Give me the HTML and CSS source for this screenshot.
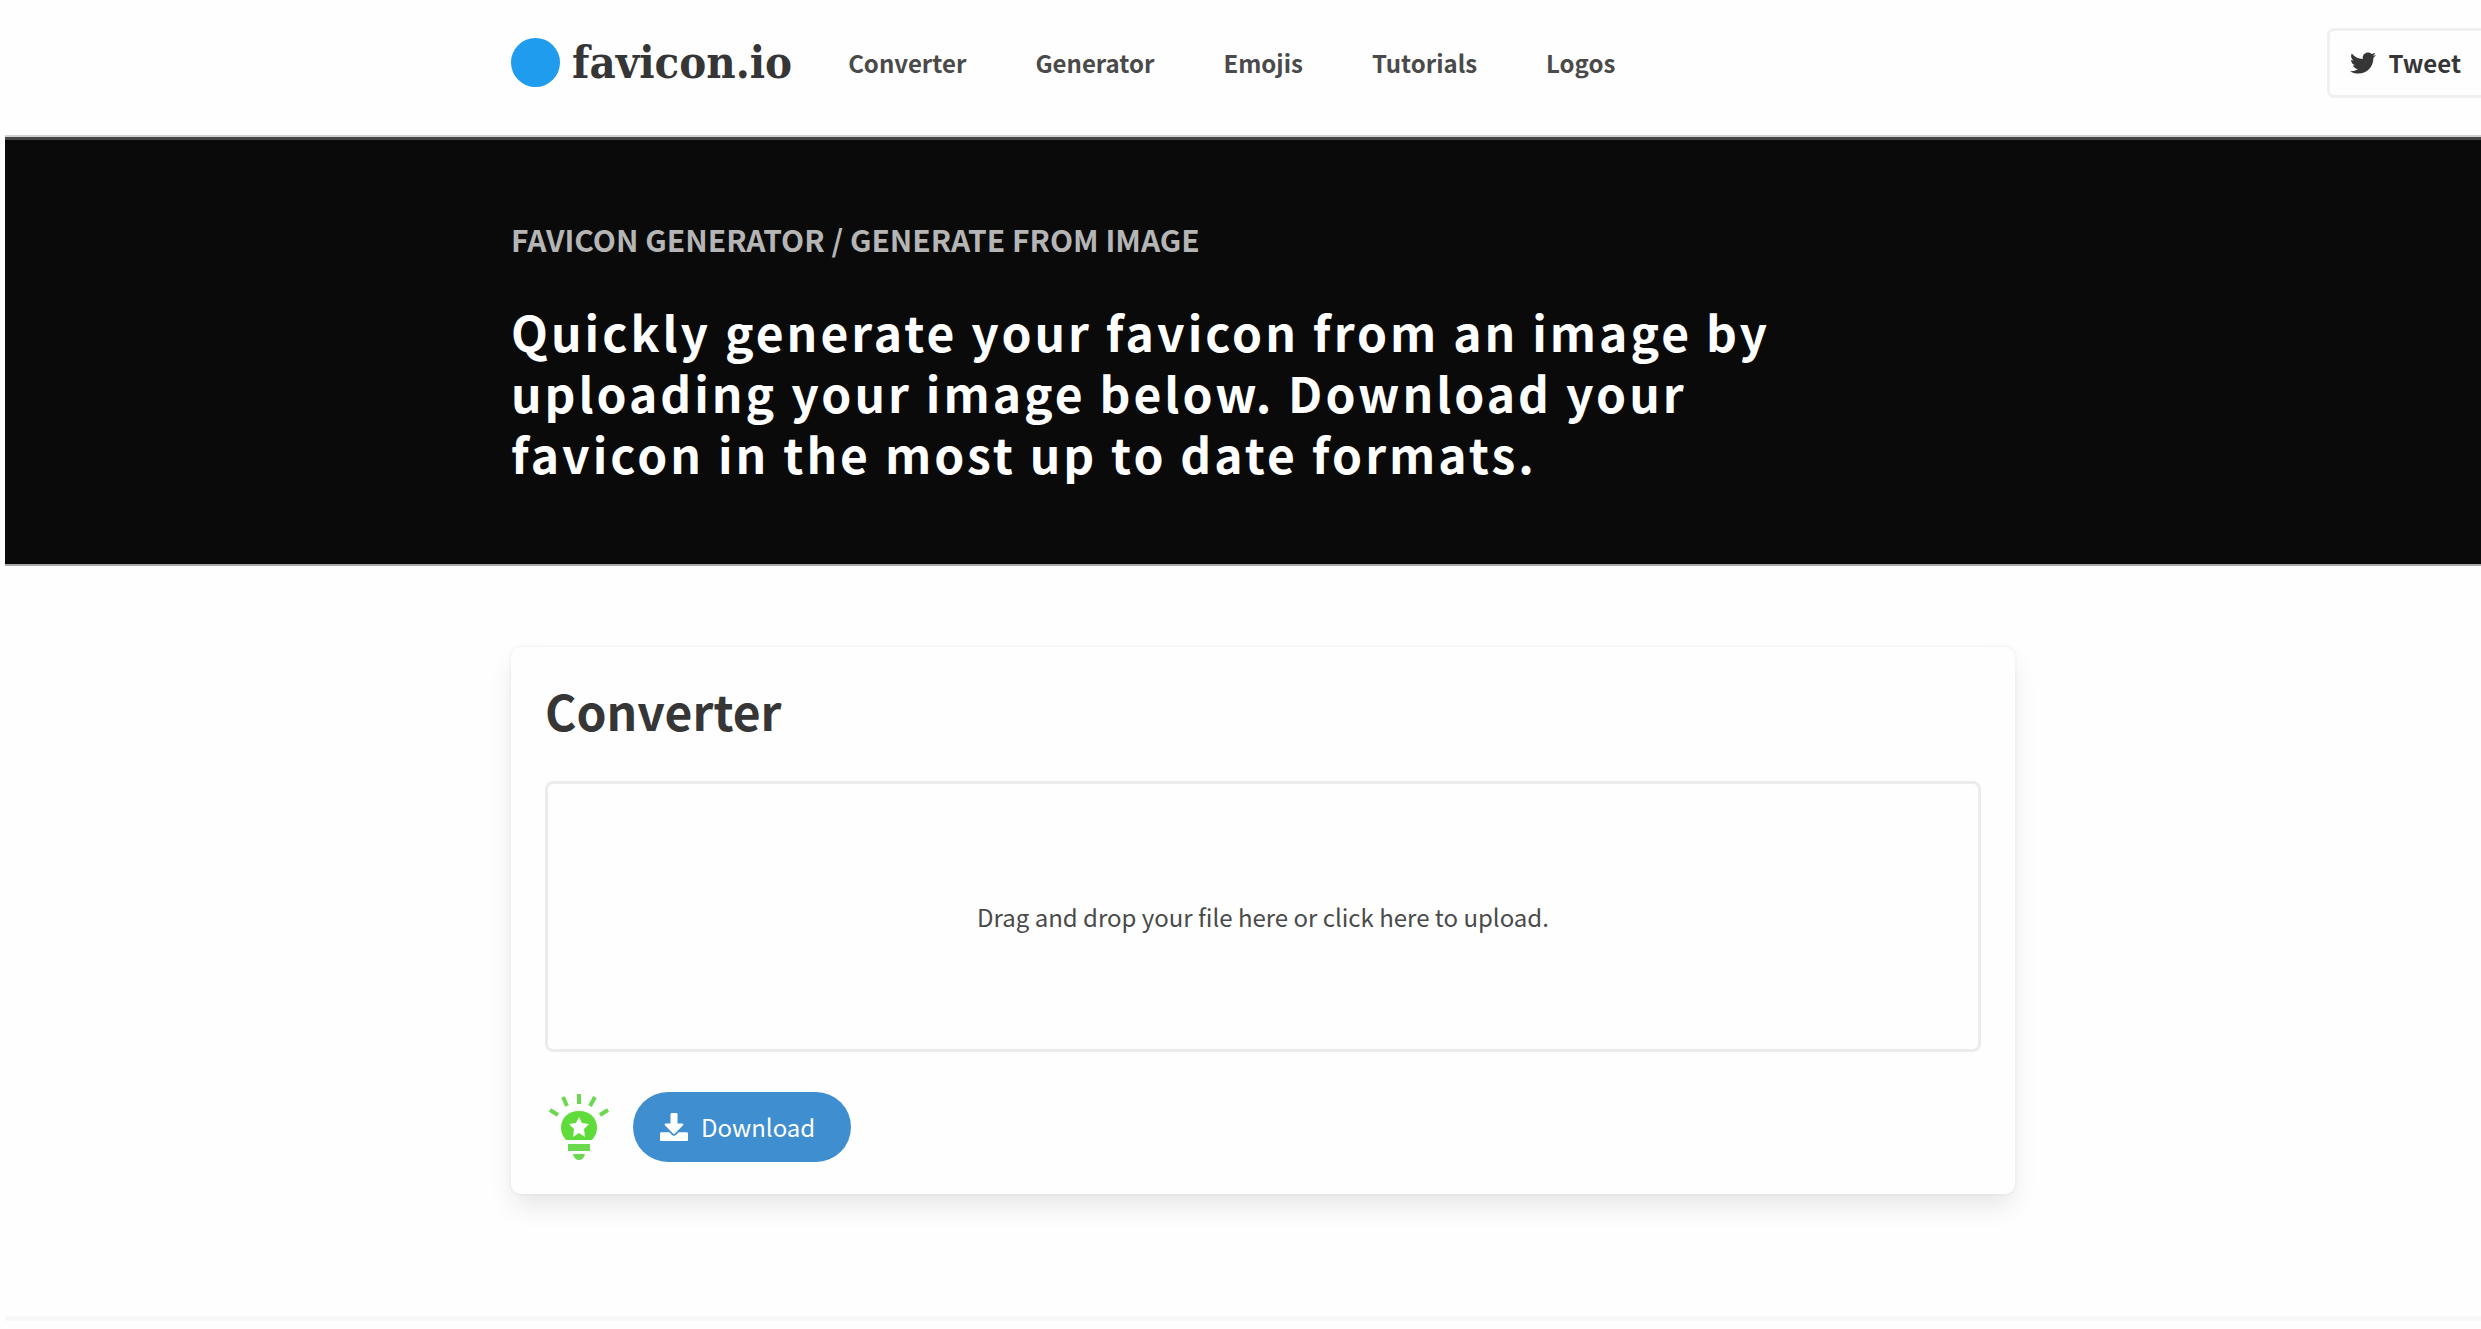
FILE: index.html
```html
<!DOCTYPE html>
<html lang="en">
<head>
<meta charset="utf-8">
<meta name="viewport" content="width=device-width, initial-scale=1">
<title>Favicon Converter - favicon.io</title>
<link rel="stylesheet" href="styles.css">
</head>
<body>
<header class="navbar">
  <div class="container navbar-inner">
    <a class="brand" href="#"><span class="brand-dot"></span><span>favicon.io</span></a>
    <nav class="menu">
      <a href="#">Converter</a>
      <a href="#">Generator</a>
      <a href="#">Emojis</a>
      <a href="#">Tutorials</a>
      <a href="#">Logos</a>
    </nav>
  </div>
  <button class="tweet" type="button">
    <svg class="tweet-icon" viewBox="0 0 512 512" aria-hidden="true"><path fill="currentColor" d="M459.37 151.716c.325 4.548.325 9.097.325 13.645 0 138.72-105.583 298.558-298.558 298.558-59.452 0-114.68-17.219-161.137-47.106 8.447.974 16.568 1.299 25.34 1.299 49.055 0 94.213-16.568 130.274-44.832-46.132-.975-84.792-31.188-98.112-72.772 6.498.974 12.995 1.624 19.818 1.624 9.421 0 18.843-1.3 27.614-3.573-48.081-9.747-84.143-51.98-84.143-102.985v-1.299c13.969 7.797 30.214 12.67 47.431 13.319-28.264-18.843-46.781-51.005-46.781-87.391 0-19.492 5.197-37.36 14.294-52.954 51.655 63.675 129.3 105.258 216.365 109.807-1.624-7.797-2.599-15.918-2.599-24.04 0-57.828 46.782-104.934 104.934-104.934 30.213 0 57.502 12.67 76.67 33.137 23.715-4.548 46.456-13.32 66.599-25.34-7.798 24.366-24.366 44.833-46.132 57.827 21.117-2.273 41.584-8.122 60.426-16.243-14.292 20.791-32.161 39.308-52.628 54.253z"/></svg>
    <span>Tweet</span>
  </button>
</header>

<section class="hero">
  <div class="container">
    <p class="hero-path">Favicon Generator / Generate from Image</p>
    <h1 class="hero-title">Quickly generate your favicon from an image by uploading your image below. Download your favicon in the most up to date formats.</h1>
  </div>
</section>

<main class="container">
  <section class="card">
    <h2 class="card-title">Converter</h2>
    <label class="dropzone" for="file">Drag and drop your file here or click here to upload.</label>
    <input class="file-input" id="file" type="file" accept="image/*">
    <div class="actions">
      <svg class="bulb" viewBox="0 0 60 68" aria-hidden="true">
        <g stroke="#6bd950" stroke-width="4" fill="none">
          <path d="M30 1v10M14 4l4 9M46 4l-5 9M1 17l8 5M59 17l-8 5"/>
        </g>
        <path fill="#5fdc3a" d="M30 18c-11 0-18 7-18 17 0 5 2 8 5 12h26c3-4 5-7 5-12 0-10-7-17-18-17z"/>
        <path fill="#fff" d="M30 24l3 6 7 1-5 5 1 8-6-4-6 4 1-8-5-5 7-1z"/>
        <path fill="#6bd950" d="M19 51h22v7H19zM24 61h12c-1 4-3 6-6 6s-5-2-6-6z"/>
      </svg>
      <button class="download" type="button">
        <svg class="download-icon" viewBox="0 0 512 512" aria-hidden="true"><path fill="currentColor" d="M216 0h80c13.300 0 24 10.700 24 24v168h87.700c17.800 0 26.700 21.500 14.100 34.100L269.700 378.300c-7.500 7.500-19.800 7.500-27.300 0L90.100 226.100c-12.600-12.600-3.700-34.100 14.100-34.100H192V24c0-13.300 10.700-24 24-24zm296 376v112c0 13.300-10.700 24-24 24H24c-13.300 0-24-10.700-24-24V376c0-13.300 10.700-24 24-24h146.700l49 49c20.100 20.100 52.500 20.100 72.600 0l49-49H488c13.300 0 24 10.700 24 24z"/></svg>
        <span>Download</span>
      </button>
    </div>
  </section>
</main>
<footer class="page-end"></footer>
</body>
</html>
```
FILE: styles.css
```css
* {
  box-sizing: border-box;
}

body {
  margin: 0;
  padding-left: 5px;
  background: #fefefe;
  color: #363636;
  font-family: "Noto Sans CJK JP", "Noto Sans", sans-serif;
  font-size: 24px;
  line-height: 36px;
  overflow-x: hidden;
}

.container {
  width: 100%;
  max-width: 1504px;
  margin-left: max(20px, calc((100% - 1504px) / 2 + 20px));
}

.navbar {
  display: flex;
  align-items: center;
  height: 137px;
  padding-bottom: 10px;
  border-bottom: 2px solid #d0d2d1;
}

.navbar-inner {
  display: flex;
  align-items: center;
  gap: 56px;
}

.brand {
  display: flex;
  align-items: center;
  gap: 12px;
  color: #363636;
  font-family: "DejaVu Serif Condensed", "DejaVu Serif", serif;
  font-size: 45px;
  font-weight: 700;
  line-height: 52px;
  text-decoration: none;
}

.brand-dot {
  width: 49px;
  height: 49px;
  border-radius: 50%;
  background: #209cee;
}

.menu {
  display: flex;
  gap: 69px;
}

.menu a {
  color: #4a4a4a;
  font-weight: 700;
  text-decoration: none;
}

.tweet {
  display: flex;
  align-items: center;
  gap: 12px;
  height: 70px;
  margin-left: auto;
  padding: 0 20px;
  border: 3px solid #f0f0f0;
  border-right: 0;
  border-radius: 7px 0 0 7px;
  background: #fefefe;
  color: #363636;
  font: inherit;
  font-weight: 700;
}

.tweet-icon {
  width: 26px;
  height: 26px;
}

.hero {
  padding: 77px 0 80px;
  border-top: 3px solid #444646;
  border-bottom: 2px solid #a8a8a8;
  background: #0a0a0a;
}

.hero-path {
  margin: 0 0 40px;
  color: #b5b5b5;
  font-size: 30px;
  font-weight: 700;
  line-height: 44px;
  text-transform: uppercase;
}

.hero-title {
  max-width: 1300px;
  margin: 0;
  color: #fff;
  font-size: 48px;
  font-weight: 700;
  letter-spacing: 3px;
  line-height: 61px;
}

.card {
  margin-top: 81px;
  padding: 34px 34px 32px;
  border-radius: 10px;
  background: #fefefe;
  box-shadow: 0 14px 27px -3px rgba(10, 10, 10, 0.1), 0 0 0 2px rgba(10, 10, 10, 0.02);
}

.card-title {
  margin: 0 0 42px;
  font-size: 48px;
  font-weight: 700;
  line-height: 58px;
}

.dropzone {
  display: flex;
  align-items: center;
  justify-content: center;
  height: 271px;
  border: 3px solid #ececec;
  border-radius: 8px;
  color: #4a4a4a;
  cursor: pointer;
}

.file-input {
  position: absolute;
  width: 1px;
  height: 1px;
  opacity: 0;
}

.actions {
  display: flex;
  align-items: center;
  gap: 24px;
  margin-top: 40px;
  padding-left: 4px;
}

.bulb {
  width: 60px;
  height: 68px;
}

.download {
  display: flex;
  align-items: center;
  gap: 13px;
  height: 70px;
  padding: 0 36px 0 27px;
  border: 0;
  border-radius: 35px;
  background: #3e8ed0;
  color: #fff;
  font: inherit;
}

.download-icon {
  width: 28px;
  height: 28px;
}

.page-end {
  height: 5px;
  margin-top: 122px;
  background: #f8f8f8;
}
```
